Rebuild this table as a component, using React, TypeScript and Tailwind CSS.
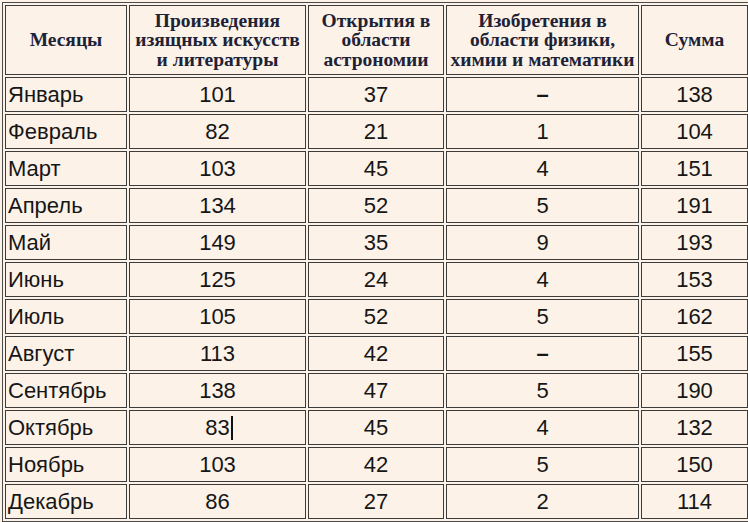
const rows: [string, string, string, string, string][] = [
  ["Январь", "101", "37", "–", "138"],
  ["Февраль", "82", "21", "1", "104"],
  ["Март", "103", "45", "4", "151"],
  ["Апрель", "134", "52", "5", "191"],
  ["Май", "149", "35", "9", "193"],
  ["Июнь", "125", "24", "4", "153"],
  ["Июль", "105", "52", "5", "162"],
  ["Август", "113", "42", "–", "155"],
  ["Сентябрь", "138", "47", "5", "190"],
  ["Октябрь", "83", "45", "4", "132"],
  ["Ноябрь", "103", "42", "5", "150"],
  ["Декабрь", "86", "27", "2", "114"],
];

const th =
  "border border-[#3b3b3b] px-0 text-center align-middle font-bold text-[19.5px] leading-[19.5px] text-[#1e2236] whitespace-nowrap overflow-hidden";
const td = "border border-[#3b3b3b] h-[35px] p-0 text-center align-middle";

export default function App() {
  return (
    <div className="w-[748px] h-[522px] bg-[#fcf2e8] overflow-hidden pt-[2px] pl-[2px]">
      <table
        className="table-fixed border-separate border-spacing-[2px] border border-[#4a4a4a] bg-[#fcf2e8]"
        style={{ width: 745 }}
      >
        <colgroup>
          <col className="w-[122px]" />
          <col className="w-[177px]" />
          <col className="w-[136px]" />
          <col className="w-[193px]" />
          <col className="w-[107px]" />
        </colgroup>
        <thead className="font-['Liberation_Serif',serif]">
          <tr>
            <th className={`${th} h-[70px]`}>Месяцы</th>
            <th className={th}>
              Произведения
              <br />
              изящных искусств
              <br />
              и литературы
            </th>
            <th className={th}>
              Открытия в
              <br />
              области
              <br />
              астрономии
            </th>
            <th className={th}>
              Изобретения в
              <br />
              области физики,
              <br />
              химии и математики
            </th>
            <th className={th}>Сумма</th>
          </tr>
        </thead>
        <tbody className="font-['Liberation_Sans',Arial,sans-serif] text-[22px] text-[#161616]">
          {rows.map((r) => (
            <tr key={r[0]}>
              <td className={`${td} text-left pl-[2px]`}>{r[0]}</td>
              <td className={td}>
                {r[1] === "83" ? (
                  <span className="relative">
                    83
                    <span className="absolute right-[-3px] top-[1px] h-[24px] w-[2px] bg-[#111]" />
                  </span>
                ) : (
                  r[1]
                )}
              </td>
              <td className={td}>{r[2]}</td>
              <td className={`${td} ${r[3] === "–" ? "font-bold" : ""}`}>{r[3]}</td>
              <td className={td}>{r[4]}</td>
            </tr>
          ))}
        </tbody>
      </table>
    </div>
  );
}
